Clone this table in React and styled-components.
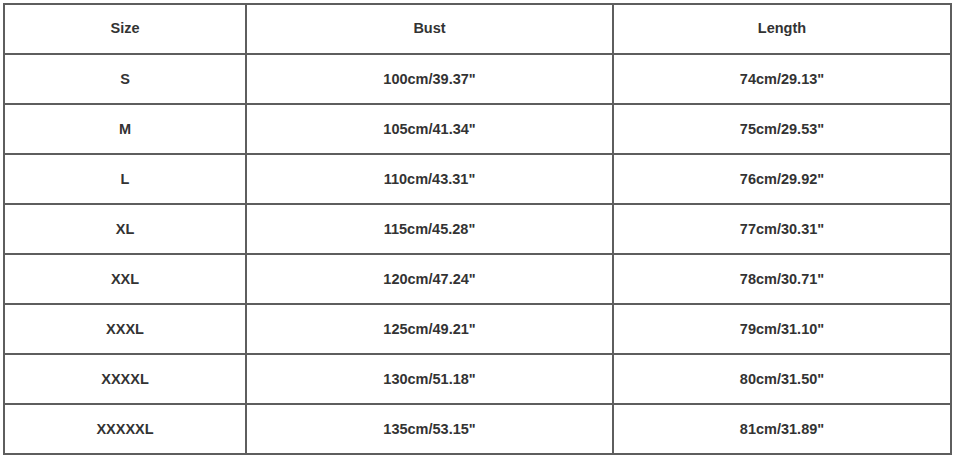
import styled, { createGlobalStyle } from "styled-components";

const Global = createGlobalStyle`
  body {
    margin: 0;
    background: #ffffff;
    font-family: "Liberation Sans", Arial, sans-serif;
  }
`;

const Page = styled.div`
  padding: 3px 0 0 3px;
`;

const Grid = styled.div`
  display: grid;
  grid-template-columns: 242px 367px 338px;
  grid-auto-rows: 50px;
  width: max-content;
  border-left: 2px solid #5e5e5e;
  border-top: 2px solid #5e5e5e;
`;

const Cell = styled.div`
  display: flex;
  align-items: center;
  justify-content: center;
  border-right: 2px solid #5e5e5e;
  border-bottom: 2px solid #5e5e5e;
  font-size: 14.5px;
  font-weight: bold;
  color: #333333;
  padding-bottom: ${(p) => (p.$head ? "2px" : "0")};
`;

const rows = [
  ["Size", "Bust", "Length"],
  ["S", "100cm/39.37\"", "74cm/29.13\""],
  ["M", "105cm/41.34\"", "75cm/29.53\""],
  ["L", "110cm/43.31\"", "76cm/29.92\""],
  ["XL", "115cm/45.28\"", "77cm/30.31\""],
  ["XXL", "120cm/47.24\"", "78cm/30.71\""],
  ["XXXL", "125cm/49.21\"", "79cm/31.10\""],
  ["XXXXL", "130cm/51.18\"", "80cm/31.50\""],
  ["XXXXXL", "135cm/53.15\"", "81cm/31.89\""],
];

export default function App() {
  return (
    <>
      <Global />
      <Page>
        <Grid>
          {rows.map((r, i) =>
            r.map((c, j) => (
              <Cell key={`${i}-${j}`} $head={i === 0}>
                {c}
              </Cell>
            ))
          )}
        </Grid>
      </Page>
    </>
  );
}
